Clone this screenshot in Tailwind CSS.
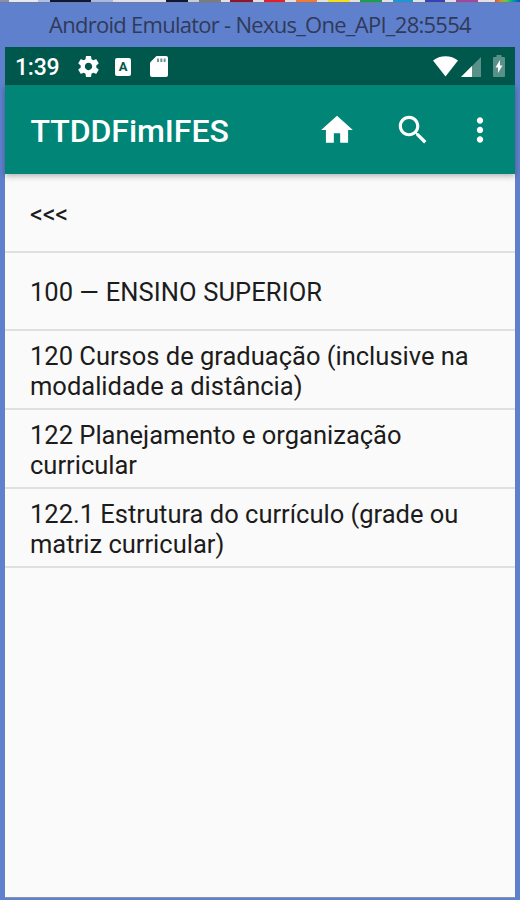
<!DOCTYPE html>
<html lang="pt-BR">
<head>
    <meta charset="UTF-8">
    <meta name="viewport" content="width=device-width, initial-scale=1.0">
    <title>TTDDFimIFES</title>
    <script src="https://cdn.jsdelivr.net/npm/@tailwindcss/browser@4"></script>
</head>
<body class="w-[520px] h-[900px] overflow-hidden flex flex-col bg-[#5f80cd] font-['Roboto',sans-serif]">
    <!-- strip of the window behind the emulator -->
    <div class="flex h-[3px] shrink-0 bg-[#8890a8] border-b border-[#6f7ba0]">
        <div class="w-[9px]"></div>
        <div class="w-[29px] bg-[#e8e8f0]"></div>
        <div class="w-[12px] bg-[#b0bfe8]"></div>
        <div class="w-[41px] bg-[#101638]"></div>
        <div class="w-[22px] bg-[#a8b8e0]"></div>
        <div class="w-[53px] bg-[#e0e0e6]"></div>
        <div class="w-[22px] bg-[#101638]"></div>
        <div class="w-[11px] bg-[#c8ccd8]"></div>
        <div class="w-[22px] bg-[#7c7c7c]"></div>
        <div class="w-[9px] bg-[#e0e0e6]"></div>
        <div class="w-[23px] bg-[#8c1530]"></div>
        <div class="w-[11px] bg-[#e0e0e6]"></div>
        <div class="w-[21px] bg-[#e02030]"></div>
        <div class="w-[11px] bg-[#e0e0e6]"></div>
        <div class="w-[21px] bg-[#f07838]"></div>
        <div class="w-[11px] bg-[#e0e0e6]"></div>
        <div class="w-[22px] bg-[#f0e020]"></div>
        <div class="w-[10px] bg-[#e0e0e6]"></div>
        <div class="w-[22px] bg-[#18a050]"></div>
        <div class="w-[11px] bg-[#e0e0e6]"></div>
        <div class="w-[20px] bg-[#1898d8]"></div>
        <div class="w-[12px] bg-[#e0e0e6]"></div>
        <div class="w-[20px] bg-[#3840b8]"></div>
        <div class="w-[11px] bg-[#e0e0e6]"></div>
        <div class="w-[22px] bg-[#a048a0]"></div>
        <div class="w-[17px] bg-[#e0e0e6]"></div>
        <div class="flex-1 bg-linear-to-r from-[#f04030] via-[#40d040] to-[#2040e0]"></div>
    </div>

    <div class="h-11 shrink-0 flex items-center justify-center pb-[3px] text-[22px] leading-none tracking-[-0.73px] text-[#303a58] font-['Open_Sans',sans-serif] whitespace-nowrap">
        <span>Android Emulator - Nexus_One_API_28:5554</span>
    </div>

    <div class="flex-1 mx-[5px] mb-[2px] flex flex-col bg-[#fafafa] border-b border-[#8a93a8]">
        <!-- status bar -->
        <div class="h-[38px] shrink-0 flex items-center bg-[#00574b] text-white pl-[10px] pr-[10px]">
            <span class="w-[61px] pt-[2px] text-[23px] leading-none font-medium tracking-[-0.2px]">1:39</span>
            <svg class="size-[25px]" viewBox="0 0 24 24" fill="currentColor"><path d="M19.43 12.98c.04-.32.07-.64.07-.98s-.03-.66-.07-.98l2.11-1.65c.19-.15.24-.42.12-.64l-2-3.46c-.12-.22-.39-.3-.61-.22l-2.49 1c-.52-.4-1.08-.73-1.69-.98l-.38-2.65C14.46 2.18 14.25 2 14 2h-4c-.25 0-.46.18-.49.42l-.38 2.65c-.61.25-1.17.59-1.69.98l-2.49-1c-.23-.09-.49 0-.61.22l-2 3.46c-.13.22-.07.49.12.64l2.11 1.65c-.04.32-.07.65-.07.98s.03.66.07.98l-2.11 1.65c-.19.15-.24.42-.12.64l2 3.46c.12.22.39.3.61.22l2.49-1c.52.4 1.08.73 1.69.98l.38 2.65c.03.24.24.42.49.42h4c.25 0 .46-.18.49-.42l.38-2.65c.61-.25 1.17-.59 1.69-.98l2.49 1c.23.09.49 0 .61-.22l2-3.46c.12-.22.07-.49-.12-.64l-2.11-1.65zM12 15.5c-1.93 0-3.5-1.57-3.5-3.5s1.57-3.5 3.5-3.5 3.5 1.57 3.5 3.5-1.57 3.5-3.5 3.5z"/></svg>
            <span class="mt-[2px] ml-[14px] w-4 h-[18px] rounded-[2px] bg-white text-[#00574b] text-[13px] leading-[18px] font-bold text-center">A</span>
            <svg class="mt-[1px] ml-[19px] w-[18px] h-[21px]" viewBox="0 0 18 21"><path fill="white" d="M6.5 0H16a2 2 0 0 1 2 2v17a2 2 0 0 1-2 2H2a2 2 0 0 1-2-2V6.500z"/><path fill="#00574b" fill-opacity=".6" d="M7 2.500h2v3.500H7zM10.300 2.500h2v3.500h-2zM13.600 2.500h2v3.500h-2z"/></svg>
            <svg class="ml-auto w-[25px] h-[21px]" viewBox="0 0 25 21"><path fill="white" d="M0 4.500C7-1.300 18-1.300 25 4.500L12.500 20.500z"/></svg>
            <svg class="mt-[1px] ml-[3px] w-[20px] h-[20px]" viewBox="0 0 20 20"><path fill="white" fill-opacity=".35" d="M20 0v20H0z"/><path fill="white" d="M11 9v11H0z"/></svg>
            <svg class="ml-3 w-3 h-[22px]" viewBox="0 0 12 22"><path fill="white" fill-opacity=".35" d="M3.500 0h5v2H11a1 1 0 0 1 1 1v18a1 1 0 0 1-1 1H1a1 1 0 0 1-1-1V3a1 1 0 0 1 1-1h2.500z"/><path fill="white" d="M7 5v5.500h2.500L5 18v-5.500H2.500z"/></svg>
        </div>

        <!-- app bar -->
        <div class="h-[89px] shrink-0 flex items-center bg-[#008577] text-white pl-[25.5px] pr-4 shadow-[0_2px_6px_rgba(0,0,0,0.3)]">
            <h1 class="flex-1 pt-[2px] text-[32px] leading-none font-medium tracking-[-0.05px]">TTDDFimIFES</h1>
            <svg class="size-[38px]" viewBox="0 0 24 24" fill="currentColor"><path d="M10 20v-6h4v6h5v-8h3L12 3 2 12h3v8z"/></svg>
            <svg class="ml-[38px] size-[38px]" viewBox="0 0 24 24" fill="currentColor"><path d="M15.500 14h-.79l-.28-.27C15.410 12.590 16 11.110 16 9.500 16 5.910 13.090 3 9.500 3S3 5.910 3 9.500 5.910 16 9.500 16c1.610 0 3.090-.59 4.230-1.570l.27.28v.79l5 4.990L20.490 19l-4.990-5zm-6 0C7.010 14 5 11.990 5 9.500S7.010 5 9.500 5 14 7.010 14 9.500 11.990 14 9.500 14z"/></svg>
            <svg class="ml-[29px] size-[38px]" viewBox="0 0 24 24" fill="currentColor"><path d="M12 8c1.100 0 2-.9 2-2s-.9-2-2-2-2 .9-2 2 .9 2 2 2zm0 2c-1.100 0-2 .9-2 2s.9 2 2 2 2-.9 2-2-.9-2-2-2zm0 6c-1.100 0-2 .9-2 2s.9 2 2 2 2-.9 2-2-.9-2-2-2z"/></svg>
        </div>

        <ul class="text-[25.5px] leading-[30px] text-[#1c1c1c]">
            <li class="h-[79px] pl-[25px] pt-[2px] flex items-center border-b-2 border-[#e0e0e0] tracking-[-0.3px]">&lt;&lt;&lt;</li>
            <li class="h-[78px] pl-[25px] pt-[2px] flex items-center border-b-2 border-[#e0e0e0]"><p>100 <span class="inline-block w-[20px] text-center"><span class="inline-block scale-x-130">–</span></span> <span class="tracking-[0.1px]">ENSINO SUPERIOR</span></p></li>
            <li class="h-[79px] pl-[25px] pt-[2px] flex items-center border-b-2 border-[#e0e0e0]">120 Cursos de graduação (inclusive na<br>modalidade a distância)</li>
            <li class="h-[79px] pl-[25px] pt-[2px] flex items-center border-b-2 border-[#e0e0e0]">122 Planejamento e organização<br>curricular</li>
            <li class="h-[79px] pl-[25px] pt-[2px] flex items-center border-b-2 border-[#e0e0e0]">122.1 Estrutura do currículo (grade ou<br>matriz curricular)</li>
        </ul>
    </div>
</body>
</html>
